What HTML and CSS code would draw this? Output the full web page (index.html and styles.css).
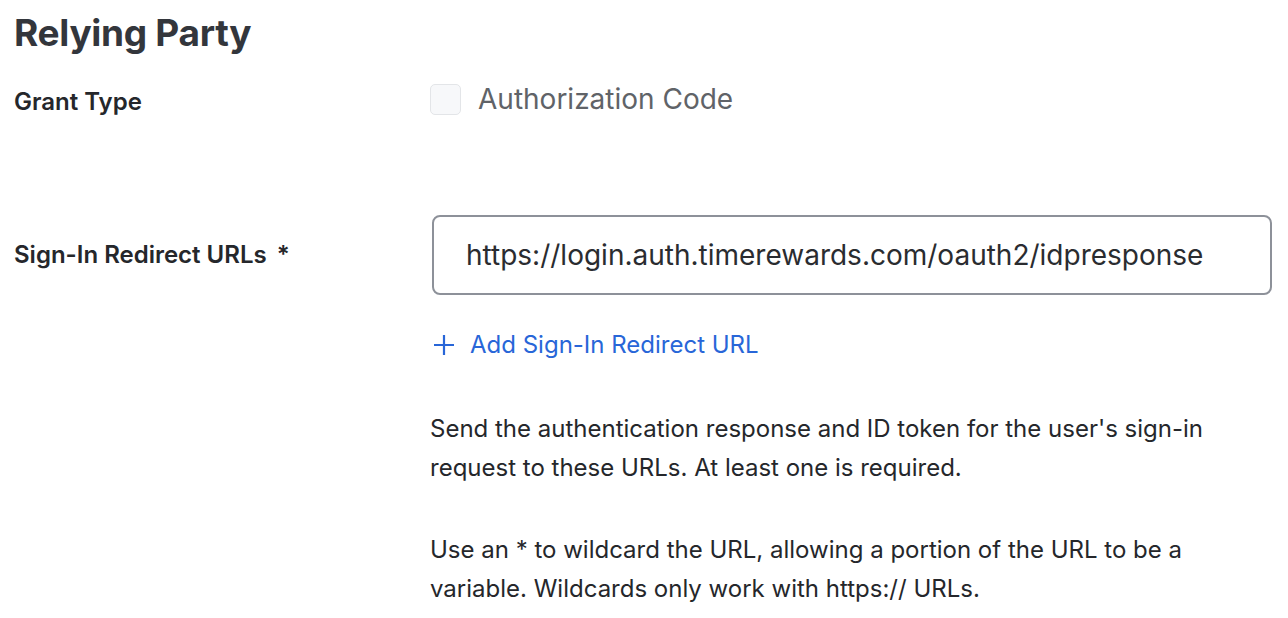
FILE: index.html
```html
<!DOCTYPE html>
<html lang="en">
<head>
  <meta charset="UTF-8">
  <title>Relying Party</title>
  <link rel="stylesheet" href="styles.css">
</head>
<body>

<section class="panel">
  <h1>Relying Party</h1>

  <div class="field-row grant-row">
    <div class="field-label">Grant Type</div>
    <div class="field-body">
      <label class="check">
        <span class="check-box"></span>
        <span class="check-text">Authorization Code</span>
      </label>
    </div>
  </div>

  <div class="field-row redirect-row">
    <div class="field-label">Sign-In Redirect URLs <span class="req">*</span></div>
    <div class="field-body">
      <div class="url-input">https://login.auth.timerewards.com/oauth2/idpresponse</div>
      <a class="add-link" href="#">
        <svg width="24" height="24" viewBox="0 0 24 24" aria-hidden="true">
          <path d="M12 2v20M2 12h20" stroke="currentColor" stroke-width="2.2" fill="none"/>
        </svg>
        Add Sign-In Redirect URL
      </a>
      <p class="help">Send the authentication response and ID token for the user's sign-in request to these URLs. At least one is required.</p>
      <p class="help">Use an * to wildcard the URL, allowing a portion of the URL to be a variable. Wildcards only work with https:// URLs.</p>
    </div>
  </div>
</section>

</body>
</html>
```

FILE: styles.css
```css
/* General */
body {
  margin: 0;
  font-family: 'Inter', 'Noto Sans', sans-serif;
  background: #ffffff;
  color: #25272b;
}

.panel {
  padding: 10px 16px 0 14px;
}

h1 {
  margin: 0;
  font-size: 37px;
  font-weight: 700;
  line-height: 46px;
  letter-spacing: -0.3px;
  color: #33363c;
}

/* Rows */
.field-row {
  display: grid;
  grid-template-columns: 416px 1fr;
  align-items: start;
}

.field-label {
  font-size: 24px;
  font-weight: 600;
  color: #25272b;
}

.req {
  margin-left: 4px;
}

.grant-row {
  margin-top: 28px;
}

.grant-row .field-label {
  padding-top: 3px;
}

.check {
  display: flex;
  align-items: center;
  gap: 17px;
  margin-top: -2px;
  height: 34px;
}

.check-box {
  width: 29px;
  height: 29px;
  border: 1px solid #e3e5e8;
  border-radius: 5px;
  background: #f7f8fa;
}

.check-text {
  font-size: 28px;
  color: #606368;
}

.redirect-row {
  margin-top: 99px;
}

.redirect-row .field-label {
  padding-top: 25px;
}

.url-input {
  height: 76px;
  border: 2px solid #8d9199;
  border-radius: 8px;
  padding: 0 32px;
  display: flex;
  align-items: center;
  font-size: 28px;
  color: #2a2c30;
  margin-left: 2px;
}

.add-link {
  display: inline-flex;
  align-items: center;
  gap: 14px;
  margin-top: 35px;
  margin-left: 2px;
  font-size: 24px;
  color: #2866d8;
  text-decoration: none;
}

.help {
  margin: 0;
  font-size: 24px;
  line-height: 39px;
  color: #25272b;
  max-width: 800px;
}

.add-link + .help {
  margin-top: 48px;
}

.help + .help {
  margin-top: 43px;
}
```
